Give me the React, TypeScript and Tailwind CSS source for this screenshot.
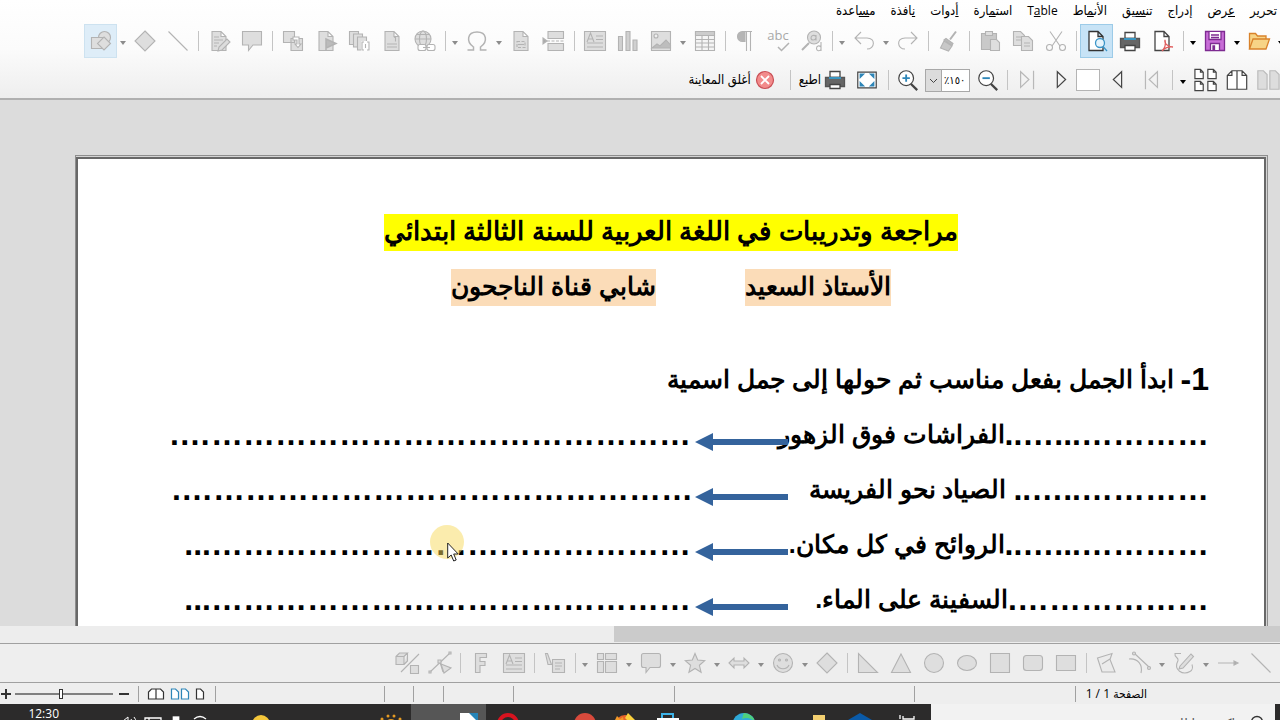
import type { ReactNode } from 'react'
import clsx from 'clsx'

const uiFont = 'font-[family-name:Open_Sans,DejaVu_Sans_Condensed,sans-serif]'
const docFont = 'font-[family-name:Liberation_Sans,sans-serif]'

type Item = { name: string; art?: ReactNode; kind?: 'sep' | 'caret'; active?: boolean; color?: boolean; dark?: boolean }

const sep = (name: string): Item => ({ name, kind: 'sep' })
const caret = (name: string, dark = false): Item => ({ name, kind: 'caret', dark })

const sheet = <path d="M5 2.5h9l5 5v14H5zM14 2.5v5h5" />

const standard: Item[] = [
  caret('فتح حديث', true),
  { name: 'فتح', color: true, art: <g stroke="#d9822b" fill="#f7d486"><path d="M2.500 20V4.500h6l2 2.500h8.500v3" /><path d="M2.500 20 6 10h16.500L19 20z" /></g> },
  caret('خيارات الحفظ', true),
  { name: 'حفظ', color: true, art: <g stroke="#7d2b91" fill="#c86dd7"><path d="M2.500 2.500h19v19h-19z" /><path fill="#fff" stroke="none" d="M6 3h12v7H6zM8 15h8v6H8z" /><path fill="none" d="M6 3v7.500h12V3M7.500 21v-6.500h9V21M8 6h8M8 8.500h8" /><path fill="#7d2b91" d="M10 17h1.500v4H10z" /></g> },
  caret('خيارات', true),
  sep('s1'),
  { name: 'PDF', color: true, art: <g stroke="#444" fill="#fff"><path d="M4 2.500h9l5 5v14H4zM13 2.500v5h5" /><path stroke="#e06060" fill="none" d="M11 22c3-3 4-7 3-11-1 4 4 7 8 7-4-.5-8 .5-11 4" /></g> },
  { name: 'طباعة', color: true, art: <g stroke="#444"><path fill="#fff" d="M7 3.500h10v6H7z" /><path stroke="#555" fill="#666" d="M2.500 9.500h19v9h-19z" /><path stroke="#3a95c0" d="M6 10h12" strokeWidth="2" /><path fill="#fff" d="M7 16.500h10v5H7z" /></g> },
  { name: 'معاينة الطباعة', color: true, active: true, art: <g stroke="#333" fill="#fff"><path d="M4 2.500h9l5 5v14H4zM13 2.500v5h5" /><circle cx="15" cy="14" r="4.500" stroke="#3a95c8" fill="#e6f4fc" /><path stroke="#3a95c8" d="m18 17.500 4 4.500" /></g> },
  sep('s2'),
  { name: 'قص', art: <g><path fill="none" d="M6 2.500 16 17M18 2.500 8 17" /><circle cx="5.500" cy="18.500" r="3" fill="none" /><circle cx="18.500" cy="18.500" r="3" fill="none" /></g> },
  { name: 'نسخ', art: <g><path d="M2.500 2.500h7l4 4v10h-11zM5 8h6M5 11h6" /><path d="M10.500 7.500h7l4 4v10h-11zM13 14h6M13 17h6" /></g> },
  { name: 'لصق', art: <g><path fill="#c9c9c9" d="M3.500 4.500h15v16h-15z" /><path d="M7.500 2.500h7v4h-7z" /><path d="M12.500 10.500h6l3 3v8h-9z" /></g> },
  sep('s3'),
  { name: 'نسخ التنسيق', art: <g><path d="m19 2.500-6 8" strokeWidth="2" /><path fill="#bbb" d="M9 9.500l7 5-1 2-8-5.500z" /><path fill="#c8c8c8" d="M7 12 3.500 19l8 3 3.500-5z" /></g> },
  sep('s4'),
  { name: 'إعادة', art: <path fill="none" d="m15 3 6 6-6 6M21 9H9C0 9 1 20 9 20" /> },
  caret('خيارات الإعادة'),
  { name: 'تراجع', art: <path fill="none" d="M9 3 3 9l6 6M3 9h12c9 0 8 11 0 11" /> },
  caret('خيارات التراجع'),
  sep('s5'),
  { name: 'بحث واستبدال', art: <g><circle cx="14" cy="8.500" r="6.500" /><path d="m9 14-7 7" strokeWidth="2" /><path fill="none" d="M16 7.500c-2-2-5-1-5 1.500s4 3 5 0zM16 6v5.500M21 13v9M21 18c-2-2-4.500-1-4.500 1.500s3 3 4.500 1" /></g> },
  { name: 'تدقيق إملائي', art: <g><text direction="ltr" x="11" y="11" fontSize="13" textAnchor="middle" stroke="none" fill="#a8a8a8">abc</text><path fill="none" d="m11 18 3.500 3.500L22 14" strokeWidth="1.500" /></g> },
  { name: 'علامات التنسيق', art: <g><path fill="#b5b5b5" d="M11 2.500H8.500a5 5 0 0 0 0 10H11z" /><path fill="none" d="M8 2.500h10M12.500 3v19M16.500 3v19" /></g> },
  sep('s6'),
  { name: 'جدول', art: <g><path fill="#f5f5f5" d="M2.500 2.500h19v19h-19z" /><path fill="#ccc" d="M2.500 2.500h19v4h-19z" /><path d="M2.500 10.500h19M2.500 14h19M2.500 18h19M9 6v16M15.500 6v16" /></g> },
  caret('خيارات الجدول'),
  { name: 'صورة', art: <g><path d="M2.500 2.500h19v19h-19z" /><circle cx="7" cy="7" r="2" fill="#eee" /><path fill="#bdbdbd" d="m3 19 5-4 3 2 6-6 4.500 5v3z" /></g> },
  { name: 'مخطط', art: <path fill="#d0d0d0" d="M2.500 7.500h4v14h-4zM10 2.500h4v19h-4zM17 11h4v10.500h-4z" /> },
  { name: 'مربع نص', art: <g><path d="M1.500 2.500h21v19h-21zM13 7h7M13 10.500h7M4 14h16M4 18h16" /><path fill="none" d="m4 13 3.500-9 3.500 9M5.500 10h4" /></g> },
  sep('s7'),
  { name: 'فاصل صفحات', art: <g><path d="M6 2.500h15.500v7H6zM6 14.500h15.500v7H6z" /><path strokeDasharray="3 1.500" d="M5 12h18" /><path fill="#aaa" d="m1 9 4 3-4 3z" /></g> },
  { name: 'حقل', art: <g>{sheet}<path fill="none" strokeDasharray="3 1.500" d="M8 12.500h8v6H8z" /><path d="M9 15.500h6" /></g> },
  caret('خيارات الحقل'),
  { name: 'رمز خاص', art: <path fill="none" strokeWidth="1.500" d="M2.500 21h6v-3C1 13 2 3 12 3s11 10 3.500 15v3h6" /> },
  caret('خيارات الرمز'),
  sep('s8'),
  { name: 'ارتباط تشعبي', art: <g><circle cx="10" cy="10" r="8" /><ellipse cx="10" cy="10" rx="3.500" ry="8" /><path d="M2 10h16M3.500 5.500h13" /><rect x="5" y="15.500" width="8" height="6" rx="2" fill="#fff" /><rect x="14" y="15.500" width="8" height="6" rx="2" fill="#fff" /><path d="M10 18.500h7" /></g> },
  { name: 'حاشية سفلية', art: <g>{sheet}<path d="M7 15h10M7 18h10M14 8.500l1.500-1v5" /></g> },
  { name: 'حاشية ختامية', art: <g><path d="M2.500 2.500h9v13h-9z" /><path d="M6.500 5h9v13h-9z" /><path d="M10.500 8h9v13h-9z" /><path fill="#fff" d="M14 12h9v10h-9z" stroke="none" /><path fill="none" d="M17 13h-2v8h2M20 13h2v8h-2M18.500 15v4" /></g> },
  { name: 'إشارة مرجعية', art: <g>{sheet}<path fill="#bbb" d="M12 10v12M12 10l10 4.500-10 4.500z" strokeWidth="1.500" /></g> },
  { name: 'مرجع تبادلي', art: <g><path d="M2.500 2.500h11v11h-11zM10 9.500h11.500v12H10z" /><path fill="#fff" d="M12 8h6v7h2l-3 3.500-3-3.500h2v-4h-4z" /></g> },
  sep('s9'),
  { name: 'تعليق', art: <path d="M2.500 2.500h19v13.500H13L8.500 21.500V16h-6z" /> },
  { name: 'تعقب التغييرات', art: <g>{sheet}<path d="M7 8h5M7 11h9M7 14h5M7 17h3" /><path fill="#ddd" d="m11 22 1-4 8-8 3 3-8 8z" /></g> },
  sep('s10'),
  { name: 'خط', art: <path fill="none" d="m2.500 2.500 19 19" /> },
  { name: 'أشكال أساسية', art: <path d="M12 2 22 12 12 22 2 12z" /> },
  caret('خيارات الأشكال'),
  { name: 'وظائف الرسم', active: true, art: <g><circle cx="15.500" cy="8.500" r="6" /><path d="M2.500 8.500h12v11h-12z" /><path d="m15 8 6.500 6.500L15 21l-6.500-6.500z" /></g> },
]

const drawing: Item[] = [
  { name: 'إدراج خط', art: <path fill="none" d="m2.500 2.500 19 19" /> },
  { name: 'سهم', art: <path fill="#aaa" d="M2 12h17M18 10l4 2-4 2z" /> },
  caret('خيارات السهم'),
  { name: 'منحنى', art: <g><path fill="none" d="M9 2.500H3c-1 4 4 4 3 7-5 10 5 15 12 11 2-1 3-4 2-7" /><path d="m8 15 11-12 2.500 2.500L11 17l-4 1z" /></g> },
  caret('خيارات المنحنى'),
  { name: 'موصل', art: <g><path fill="none" d="M1 8c9-1 14 6 12 14M6 2l15 14" /><circle cx="6" cy="2.500" r="1.500" /><circle cx="21" cy="17" r="1.500" /></g> },
  { name: 'مضلع', art: <path fill="#ebebeb" d="M2.500 7 17 2.500l-2 6 5 12.500H7z M7 13l8-5" /> },
  sep('d1'),
  { name: 'مستطيل', art: <path d="M2.500 4.500h19v15h-19z" /> },
  { name: 'مستطيل مستدير', art: <rect x="2.500" y="4.500" width="19" height="15" rx="3" /> },
  { name: 'مربع', art: <path d="M2.500 2.500h19v19h-19z" /> },
  { name: 'قطع ناقص', art: <ellipse cx="12" cy="12" rx="9.500" ry="7.500" /> },
  { name: 'دائرة', art: <circle cx="12" cy="12" r="9.500" /> },
  { name: 'مثلث', art: <path d="m12 3 9.500 18.500h-19z" /> },
  { name: 'مثلث قائم', art: <path d="M2.500 2.500v19h19z" /> },
  sep('d2'),
  { name: 'معين', art: <path d="M12 2 22 12 12 22 2 12z" /> },
  caret('خيارات المعين'),
  { name: 'رموز', art: <g><circle cx="12" cy="12" r="9.500" /><path fill="none" d="M6 14c2 5 10 5 12 0" /><circle cx="8.500" cy="9" r="1" /><circle cx="15.500" cy="9" r="1" /></g> },
  caret('خيارات الرموز'),
  { name: 'أسهم مجسمة', art: <path d="m2 12 5-5v3h10V7l5 5-5 5v-3H7v3z" /> },
  caret('خيارات الأسهم'),
  { name: 'نجوم', art: <path d="m12 2.500 2.700 6.500 7 .6-5.300 4.700 1.700 7L12 17.500l-6.100 3.800 1.700-7L2.300 9.600l7-.6z" /> },
  caret('خيارات النجوم'),
  { name: 'وسائل شرح', art: <path d="M4.500 2.500h15q2 0 2 2v10q0 2-2 2H11l-4 5v-5H4.500q-2 0-2-2v-10q0-2 2-2z" /> },
  caret('خيارات الشرح'),
  { name: 'مخطط انسيابي', art: <path d="M2.500 2.500h6v6h-6zM10.500 2.500h11v6h-11zM2.500 10.500h6v11h-6zM10.500 10.500h11v11h-11z" /> },
  caret('خيارات المخطط'),
  sep('d3'),
  { name: 'وسيلة شرح نصية', art: <g><path d="M9.500 8.500h12v13h-12zM12 12h7M12 15h7M12 18h5" /><path d="M2.500 2.500h2l4 11H5z" /></g> },
  sep('d4'),
  { name: 'نص', art: <g><path d="M1.500 2.500h21v19h-21zM13 7h7M13 10.500h7M4 14h16M4 18h16" /><path fill="none" d="m4 13 3.500-9 3.500 9M5.500 10h4" /></g> },
  { name: 'فونتورك', art: <path d="M6.500 2.500h11v4H11v4h5v4h-5v7H6.500z" /> },
  sep('d5'),
  { name: 'تحرير النقاط', art: <g><path fill="none" d="M2 21 22 2M12 11l3 10" /><path d="m13 13 10 4-7 5zM10 9h3v3h-3zM1 20h2v2H1zM21 1h2v2h-2z" /></g> },
  { name: 'بثق', art: <g><path d="M1 5.500h8v8H1zM1 5.500 4.500 2h8L9 5.500M12.500 2v8L9 13.500" /><path d="M24 3 6 21M15.500 14.500h8v8h-8z" /></g> },
]

function Caret({ dark }: { dark?: boolean }) {
  return (
    <svg viewBox="0 0 8 5" className={clsx('h-[5px] w-2', dark ? 'fill-black' : 'fill-[#8c8c8c]')}>
      <path d="M1 0h6L4 4z" />
    </svg>
  )
}

function Separator() {
  return (
    <span className="flex w-2 shrink-0 justify-center">
      <span className="h-5 w-px bg-[#c4c4c4]" />
    </span>
  )
}

function ToolItem({ item }: { item: Item }) {
  if (item.kind === 'sep') return <Separator />
  if (item.kind === 'caret') {
    return (
      <button aria-label={item.name} className="flex h-8 w-[11px] shrink-0 items-center justify-center pt-1">
        <Caret dark={item.dark} />
      </button>
    )
  }
  return (
    <button
      aria-label={item.name}
      className={clsx(
        'flex h-[34px] w-[33px] shrink-0 items-center justify-center',
        item.active && item.color && 'border border-[#9ccbe8] bg-[#c7e3f6]',
        item.active && !item.color && 'border border-[#cde2f0] bg-[#deedf8]',
      )}
    >
      <svg viewBox="0 0 24 24" className="size-6 shrink-0 overflow-visible" fill="#dedede" stroke="#b3b3b3" strokeWidth={item.color ? 1.3 : 1.1}>
        {item.art}
      </svg>
    </button>
  )
}

function PreviewButton({ label, wide, children, color = '#444' }: { label: string; wide?: boolean; children: ReactNode; color?: string }) {
  return (
    <button aria-label={label} className={clsx('flex h-8 shrink-0 items-center justify-center', wide ? 'w-[34px]' : 'w-[31px]')}>
      <svg viewBox="0 0 26 26" className="size-6 shrink-0" fill="none" stroke={color} strokeWidth="1.3">
        {children}
      </svg>
    </button>
  )
}

function MenuBar() {
  return (
    <nav className="flex h-[22px] items-center gap-[15px] pr-[3px] text-[13px] whitespace-nowrap text-black">
      <a href="#edit">تحر<u>ي</u>ر</a>
      <a href="#view"><u>ع</u>رض</a>
      <a href="#insert"><u>إ</u>دراج</a>
      <a href="#format">تن<u>س</u>يق</a>
      <a href="#styles">الأن<u>م</u>اط</a>
      <a href="#table" className="text-xs">T<u>a</u>ble</a>
      <a href="#form">است<u>م</u>ارة</a>
      <a href="#tools"><u>أ</u>دوات</a>
      <a href="#window"><u>ن</u>افذة</a>
      <a href="#help">م<u>س</u>اعدة</a>
    </nav>
  )
}

function PreviewBar() {
  return (
    <div className="flex h-[38px] items-center overflow-hidden pt-0.5 text-[13px] whitespace-nowrap">
      <span className="-mr-[3px] flex">
        <PreviewButton label="وضع الكتاب" color="#bbb">
          <path fill="#ddd" d="M2 3h6l4 4v16H2zM15 3h6l4 4v16H15z" />
        </PreviewButton>
      </span>
      <PreviewButton label="معاينة صفحتين">
        <path fill="#fff" d="M13 3v20H2.500V8l5-5zM13 3v20h10.500V8l-5-5zM7.500 3v5h-5M18.500 3v5h5" />
      </PreviewButton>
      <PreviewButton label="معاينة عدة صفحات">
        <path fill="#fff" d="M1 1.500h6l3 3v7H1zM15 1.500h6l3 3v7h-9zM1 14.500h6l3 3v7H1zM15 14.500h6l3 3v7h-9zM7 1.500v3h3M21 1.500v3h3M7 14.500v3h3M21 14.500v3h3" />
      </PreviewButton>
      <button aria-label="خيارات المعاينة" className="flex w-[14px] justify-center pt-1"><Caret dark /></button>
      <Separator />
      <PreviewButton label="الصفحة الأولى" wide color="#b8b8b8">
        <path d="M7 3v20M20 4v17l-9-8.500z" />
      </PreviewButton>
      <PreviewButton label="الصفحة السابقة" wide>
        <path d="M18 4v17l-9-8.500z" />
      </PreviewButton>
      <input aria-label="رقم الصفحة" className="h-[22px] w-6 shrink-0 border border-[#b4b4b4] bg-white" />
      <PreviewButton label="الصفحة التالية">
        <path d="M9 4v17l9-8.500z" />
      </PreviewButton>
      <PreviewButton label="الصفحة الأخيرة" wide color="#b8b8b8">
        <path d="M5 4v17l9-8.500zM19 3v20" />
      </PreviewButton>
      <Separator />
      <PreviewButton label="تصغير">
        <path d="m16 17 7 7" strokeWidth="2.500" />
        <circle cx="11" cy="11" r="8" fill="#fff" />
        <path d="M7 11h8" stroke="#2e86b8" strokeWidth="2" />
      </PreviewButton>
      <span className="relative mx-[2px] shrink-0">
        <select aria-label="نسبة التكبير" dir="ltr" className="block h-[23px] w-[45px] appearance-none border border-[#a8a8a8] bg-white pl-[18px] text-[11px]">
          <option>٪١٥٠</option>
        </select>
        <svg viewBox="0 0 17 23" className="pointer-events-none absolute top-0 left-0 h-[23px] w-[17px]" stroke="#a8a8a8" fill="#dcdcdc">
          <path d="M.5.500h16v22H.5z" />
          <path d="m5 10 3.500 3.500L12 10" fill="none" stroke="#444" />
        </svg>
      </span>
      <PreviewButton label="تكبير">
        <path d="m16 17 7 7" strokeWidth="2.500" />
        <circle cx="11" cy="11" r="8" fill="#fff" />
        <path d="M7 11h8M11 7v8" stroke="#2e86b8" strokeWidth="2" />
      </PreviewButton>
      <span className="flex pl-0.5"><Separator /></span>
      <PreviewButton label="ملء الشاشة">
        <path fill="#fff" d="M3 4.500h20v17H3z" />
        <path fill="#2e86b8" stroke="none" d="M5 6h6l-6 6zM21 6h-6l6 6zM5 20h6l-6-6zM21 20h-6l6-6z" />
      </PreviewButton>
      <button className="flex shrink-0 items-center gap-0.5 pr-1">
        <svg viewBox="0 0 24 24" className="size-6" stroke="#444" strokeWidth="1.3">
          <path fill="#fff" d="M7 3.500h10v6H7z" />
          <path stroke="#555" fill="#666" d="M2.500 9.500h19v9h-19z" />
          <path stroke="#3a95c0" d="M6 10h12" strokeWidth="2" />
          <path fill="#fff" d="M7 16.500h10v4H7z" />
        </svg>
        اطبع
      </button>
      <span className="flex pr-1 pl-0.5"><Separator /></span>
      <button className="flex shrink-0 items-center gap-1 pr-[10px]">
        <svg viewBox="0 0 20 20" className="size-5">
          <circle cx="10" cy="10" r="8.500" fill="#f28b8b" stroke="#c94f55" strokeWidth="1.200" />
          <path d="m6 6 8 8M14 6l-8 8" stroke="#fff" strokeWidth="1.800" />
        </svg>
        أغلق المعاينة
      </button>
    </div>
  )
}

const wideDots = '…'.repeat(15)

const exercises = [
  { blank: '…………...…..', text: 'الفراشات فوق الزهور', answer: wideDots + '….' },
  { blank: '…………..…..', text: '\u00a0الصياد نحو الفريسة', answer: wideDots + '….', near: true },
  { blank: '…………...…..', text: 'الروائح في كل مكان.', answer: wideDots + '...' },
  { blank: '……………….', text: 'السفينة على الماء.', answer: wideDots + '...' },
]

function Document() {
  return (
    <main className="relative min-h-0 flex-1 overflow-hidden border-t-2 border-[#b0b0b0] bg-[#dcdcdc] pt-[55px] pr-3 pl-[75px]">
      <div className="h-full border-t border-r border-l border-[#8e8e8e] bg-[#d4d4d4] pt-px pr-px">
        <article className={clsx('h-[900px] border-2 border-[#686868] bg-white pt-[46px] pr-[55px] pl-14 text-[25px] font-bold whitespace-nowrap text-black', docFont)}>
          <div className="-mr-[55px] -ml-14">
            <h1 className="flex h-[55px] items-center justify-center text-[26px]">
              <span className="h-[37px] bg-[#ffff00] leading-[34px]">مراجعة وتدريبات في اللغة العربية للسنة الثالثة ابتدائي</span>
            </h1>
            <p className="flex h-[55px] items-center justify-center gap-[89px]">
              <span className="h-[37px] bg-[#fbdcb8] leading-[34px]">الأستاذ السعيد</span>
              <span className="h-[37px] bg-[#fbdcb8] leading-[34px]">شابي قناة الناجحون</span>
            </p>
          </div>
          <h2 className="mt-[37px] flex h-[55px] items-center leading-[55px]">
            <span className="text-[32px]">1-</span>
            <span>&nbsp;ابدأ الجمل بفعل مناسب ثم حولها إلى جمل اسمية</span>
          </h2>
          {exercises.map((row) => (
            <div key={row.text} className="flex h-[55px] items-center leading-[55px]">
              <p className="flex w-[421px] shrink-0 items-center">
                <span className="text-[32px]">{row.blank}</span>
                <span>{row.text}</span>
              </p>
              <svg viewBox="0 0 93 20" className="mt-[14px] h-5 w-[93px] shrink-0 fill-[#34639c]">
                <path d="M0 10 18 1v6h75v6H18v6z" />
              </svg>
              <span className={clsx('text-[32px]', row.near ? 'pr-0.5' : 'pr-1')}>{row.answer}</span>
            </div>
          ))}
        </article>
      </div>
      <span className="absolute top-[425px] left-[430px] size-[34px] rounded-full bg-[#f7d95c]/50" />
      <svg viewBox="0 0 12 20" className="absolute top-[442px] left-[447px] h-5 w-3" fill="#fff" stroke="#222">
        <path d="M.7 1v15l3.500-3 2.500 6 2.500-1-2.500-6h4.500z" />
      </svg>
    </main>
  )
}

function StatusBar() {
  const cell = 'h-4 border-r border-[#a0a0a0]'
  return (
    <footer className="flex h-[22px] shrink-0 items-center border-t border-[#a0a0a0] bg-[#eee] text-xs">
      <span className="w-[204px] shrink-0 pr-[133px] whitespace-nowrap">الصفحة 1 / 1</span>
      <span className={clsx(cell, 'w-[161px]')} />
      <span className={clsx(cell, 'w-[240px]')} />
      <span className={clsx(cell, 'w-[161px]')} />
      <span className={clsx(cell, 'w-[70px]')} />
      <span className={clsx(cell, 'w-[30px]')} />
      <span className={clsx(cell, 'w-[29px]')} />
      <span className={clsx(cell, 'flex-1')} />
      <span className={clsx(cell, 'flex w-[77px] items-center gap-[5px] pr-2.5')}>
        <button aria-label="صفحة واحدة">
          <svg viewBox="0 0 10 12" className="h-3 w-[10px]" fill="#fff" stroke="#333" strokeWidth="1.200"><path d="M1.500 1h4l3 3v7h-7z" /></svg>
        </button>
        <button aria-label="عدة صفحات">
          <svg viewBox="0 0 20 12" className="h-3 w-5" fill="#fff" stroke="#2e86b8" strokeWidth="1.200"><path d="M1.500 1h4l3 3v7h-7zM11.500 1h4l3 3v7h-7z" /></svg>
        </button>
        <button aria-label="كتاب">
          <svg viewBox="0 0 18 12" className="h-3 w-[18px]" fill="#fff" stroke="#333" strokeWidth="1.200"><path d="M9 1v10H1.500V4l3-3zM9 1v10h7.500V4l-3-3z" /></svg>
        </button>
      </span>
      <span className={clsx(cell, 'flex w-[139px] items-center gap-1 pr-2')}>
        <button aria-label="تصغير العرض" className="flex h-3 w-[13px] items-center justify-center"><span className="h-0.5 w-[10px] bg-[#333]" /></button>
        <input
          type="range"
          aria-label="التكبير"
          dir="ltr"
          defaultValue={47}
          className="h-3 w-[98px] appearance-none bg-transparent [&::-webkit-slider-runnable-track]:h-0.5 [&::-webkit-slider-runnable-track]:bg-[#808080] [&::-webkit-slider-thumb]:-mt-1 [&::-webkit-slider-thumb]:h-[10px] [&::-webkit-slider-thumb]:w-1 [&::-webkit-slider-thumb]:appearance-none [&::-webkit-slider-thumb]:border [&::-webkit-slider-thumb]:border-[#333] [&::-webkit-slider-thumb]:bg-white"
        />
        <button aria-label="تكبير العرض" className="relative flex h-3 w-[10px] items-center justify-center">
          <span className="h-0.5 w-[10px] bg-[#333]" />
          <span className="absolute h-[10px] w-0.5 bg-[#333]" />
        </button>
      </span>
    </footer>
  )
}

function TaskIcon({ label, className, children }: { label: string; className: string; children: ReactNode }) {
  return (
    <button aria-label={label} className={clsx('flex h-10 shrink-0 items-start pt-[9px]', className)}>
      <svg viewBox="0 0 24 22" className="h-[22px] w-6">{children}</svg>
    </button>
  )
}

function TaskBar() {
  return (
    <div className="flex h-4 shrink-0 items-start overflow-hidden bg-[#2c2b2b] text-xs text-white">
      <label className="mr-[5px] flex h-10 w-[344px] shrink-0 items-start bg-[#f2f2f2] pt-2.5 pr-2 text-[#444]">
        <svg viewBox="0 0 20 20" className="size-5 shrink-0" fill="none" stroke="#333" strokeWidth="1.400"><circle cx="10" cy="8" r="5.500" /></svg>
        <input aria-label="بحث" placeholder="اكتب هنا للبحث" className="w-full bg-transparent pr-3 text-sm leading-5 placeholder:text-[#555]" />
      </label>
      <TaskIcon label="عرض المهام" className="w-12 justify-center">
        <path d="M5 6V2M8 3v3h11V3M8 9h11v9H8z" fill="none" stroke="#fff" strokeWidth="1.300" />
      </TaskIcon>
      <TaskIcon label="برنامج" className="w-[46px] justify-center">
        <path d="M12 0 24 7v10l-12 5L0 17V7z" fill="#0a5aa8" />
      </TaskIcon>
      <TaskIcon label="الملفات" className="w-[70px] pr-1.5">
        <path d="M6 2h12v18H0V8h6z" fill="#f3cf70" />
      </TaskIcon>
      <TaskIcon label="المتصفح" className="w-[77px] pr-[11px]">
        <circle cx="12" cy="11.500" r="11.500" fill="#2fa9d8" />
        <path d="M12 0a11.500 11.500 0 0 1 11 9c-4-4-9-5-13-3 1-3 1-5 2-6z" fill="#4fd07c" />
      </TaskIcon>
      <TaskIcon label="المتجر" className="w-[45px] justify-center">
        <path d="M6 6V1h11v5" fill="none" stroke="#3db3e8" strokeWidth="2" />
        <path d="M1 5h22v14H1z" fill="#fff" />
      </TaskIcon>
      <TaskIcon label="فايرفوكس" className="w-10 justify-center">
        <circle cx="12" cy="12" r="10" fill="#e8622a" />
        <path d="M12 5 15 0l8 8-4 4z" fill="#fbd13c" />
        <path d="M2 7 4 3l3 3 3-2 1 5z" fill="#f39a28" />
        <path d="M8 8h6v4H8z" fill="#7a4bc4" />
      </TaskIcon>
      <TaskIcon label="كروم" className="w-[75px] pr-2">
        <circle cx="12" cy="11" r="11" fill="#d94a3c" />
        <path d="M8 7h12v3H8z" fill="#f5d7cd" />
      </TaskIcon>
      <TaskIcon label="أوبرا" className="w-11 justify-center">
        <ellipse cx="12" cy="11" rx="9" ry="9" fill="none" stroke="#d8131f" strokeWidth="4" />
      </TaskIcon>
      <TaskIcon label="ليبر أوفيس" className="w-[75px] bg-[#565656] pr-1.5">
        <path d="M4 0h10l8 8v14H4z" fill="#fff" />
        <path d="M13 0h9v9z" fill="#2584b8" />
      </TaskIcon>
      <TaskIcon label="الطقس" className="w-[71px] pr-2">
        <g fill="#e59a22"><circle cx="3" cy="6" r="1.500" /><circle cx="9" cy="3" r="1.500" /><circle cx="15" cy="3" r="1.500" /><circle cx="21" cy="6" r="1.500" /><circle cx="12" cy="12" r="6" /></g>
      </TaskIcon>
      <span className="flex-1" />
      <TaskIcon label="إشعار" className="w-8 justify-center">
        <circle cx="12" cy="11" r="9" fill="#f4c63a" />
      </TaskIcon>
      <span className="w-[33px]" />
      <TaskIcon label="الشبكة" className="w-6 justify-center">
        <path d="M6 6q6-5 12 0" fill="none" stroke="#fff" strokeWidth="1.300" />
      </TaskIcon>
      <TaskIcon label="وحدة تخزين" className="w-[23px] justify-center">
        <path d="M8 3h7v8H8z" fill="#fff" />
      </TaskIcon>
      <TaskIcon label="لوحة المفاتيح" className="w-6 justify-center">
        <path d="M4 5h16v10H4zM8 5v9M4 8h16" fill="none" stroke="#fff" strokeWidth="1.300" />
      </TaskIcon>
      <TaskIcon label="الصوت" className="w-6 justify-center">
        <path d="m6 8 5-4v12M14 6q3 3 0 6M17 4q4 5 0 10" fill="none" stroke="#fff" />
      </TaskIcon>
      <time className="w-[117px] shrink-0 pr-[58px] leading-5">12:30</time>
    </div>
  )
}

export default function App() {
  return (
    <div dir="rtl" className={clsx('flex h-screen flex-col overflow-hidden bg-[#eee]', uiFont)}>
      <header className="shrink-0 bg-linear-to-b from-white via-[#fbfbfb] to-[#eee]">
        <MenuBar />
        <div className="flex h-[38px] items-center overflow-hidden">
          <div className="-mr-[6px] flex items-center">
            {standard.map((item) => <ToolItem key={item.name} item={item} />)}
          </div>
        </div>
        <PreviewBar />
      </header>
      <Document />
      <div className="h-[17px] shrink-0 bg-[#ededed]">
        <div className="h-4 w-[52%] bg-[#cbcbcb]" />
      </div>
      <div className="flex h-[39px] shrink-0 items-center overflow-hidden border-t border-[#a0a0a0] bg-[#eee] pr-[3px]">
        {drawing.map((item) => <ToolItem key={item.name} item={item} />)}
      </div>
      <StatusBar />
      <TaskBar />
    </div>
  )
}
